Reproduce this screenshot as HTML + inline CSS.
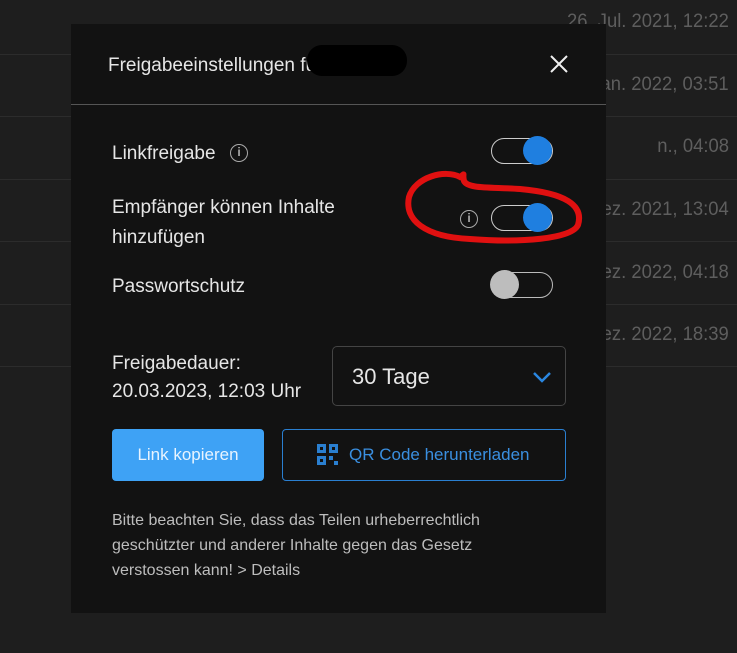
<!DOCTYPE html>
<html><head><meta charset="utf-8"><style>
*{margin:0;padding:0;box-sizing:border-box}
body{width:737px;height:653px;background:#1e1e1e;font-family:"Liberation Sans",sans-serif;position:relative;overflow:hidden;color:#e8e8e8}
.row{position:absolute;left:0;width:737px;height:1px;background:#2c2c2c}
.date{position:absolute;right:8px;font-size:19px;color:#5e5e5e;transform:scaleX(.97);transform-origin:right}
.modal{position:absolute;left:71px;top:24px;width:535px;height:589px;background:#121212}
.t{position:absolute;font-size:18px;color:#e6e6e6}
.tog{position:absolute;width:62px;height:26px;border:1.5px solid #ccc;border-radius:13px}
.knob{position:absolute;top:-3px;width:29px;height:29px;border-radius:50%;background:#1f7fe0}
.info{position:absolute;width:18px;height:18px;border:1.5px solid #aaa;border-radius:50%;font-size:12px;color:#aaa;text-align:center;line-height:15px;font-weight:bold}
</style></head><body>
<div class="row" style="top:54px"></div><div class="row" style="top:116px"></div><div class="row" style="top:179px"></div><div class="row" style="top:241px"></div><div class="row" style="top:304px"></div><div class="row" style="top:366px"></div>
<div class="date" style="top:11px">26. Jul. 2021, 12:22</div>
<div class="date" style="top:74px">Jan. 2022, 03:51</div>
<div class="date" style="top:136px">n., 04:08</div>
<div class="date" style="top:199px">Dez. 2021, 13:04</div>
<div class="date" style="top:262px">Dez. 2022, 04:18</div>
<div class="date" style="top:324px">Dez. 2022, 18:39</div>
<div class="modal">
<div class="t" style="left:37px;top:31px;font-size:19px">Freigabeeinstellungen fü</div>
<div style="position:absolute;left:236px;top:21px;width:100px;height:31px;background:#000;border-radius:15px"></div>
<svg style="position:absolute;left:478px;top:30px" width="20" height="20"><path d="M2 2L18 18M18 2L2 18" stroke="#eee" stroke-width="2"/></svg>
<div style="position:absolute;left:0;top:80px;width:535px;height:1px;background:#555"></div>
<div class="t" style="left:41px;top:119px;font-size:19px">Linkfreigabe</div>
<div class="info" style="left:159px;top:120px">i</div>
<div class="tog" style="left:420px;top:114px"><div class="knob" style="left:31px"></div></div>
<div class="t" style="left:41px;top:169px;line-height:30px;font-size:19px">Empfänger können Inhalte<br>hinzufügen</div>
<div class="info" style="left:389px;top:186px">i</div>
<div class="tog" style="left:420px;top:181px"><div class="knob" style="left:31px"></div></div>
<div class="t" style="left:41px;top:252px;font-size:19px">Passwortschutz</div>
<div class="tog" style="left:420px;top:248px;border-color:#bbb"><div class="knob" style="left:-2px;background:#bdbdbd"></div></div>
<div class="t" style="left:41px;top:326px;line-height:28px;font-size:19px">Freigabedauer:<br>20.03.2023, 12:03 Uhr</div>
<div style="position:absolute;left:261px;top:322px;width:234px;height:60px;border:1px solid #444;border-radius:5px"></div>
<div class="t" style="left:281px;top:340px;font-size:22px">30 Tage</div>
<svg style="position:absolute;left:461px;top:347px" width="20" height="12"><path d="M2 2L10 10L18 2" stroke="#2a86e0" stroke-width="2.5" fill="none"/></svg>
<div style="position:absolute;left:41px;top:405px;width:152px;height:52px;background:#3ea2f5;border-radius:4px;color:#e8f4ff;font-size:17px;text-align:center;line-height:52px">Link kopieren</div>
<div style="position:absolute;left:211px;top:405px;width:284px;height:52px;border:1.5px solid #2a7fd0;border-radius:4px;color:#3a8fe0;font-size:17px;line-height:49px;padding-left:66px">QR Code herunterladen</div>
<svg style="position:absolute;left:246px;top:420px" width="21" height="21" fill="#2a7fd0"><rect x="0" y="0" width="9" height="9"/><rect x="12" y="0" width="9" height="9"/><rect x="0" y="12" width="9" height="9"/><rect x="12" y="12" width="4" height="4"/><rect x="17" y="17" width="4" height="4"/><rect x="3" y="3" width="3" height="3" fill="#121212"/><rect x="15" y="3" width="3" height="3" fill="#121212"/><rect x="3" y="15" width="3" height="3" fill="#121212"/></svg>
<div class="t" style="left:41px;top:484px;font-size:16px;line-height:25px;color:#bdbdbd;width:410px">Bitte beachten Sie, dass das Teilen urheberrechtlich geschützter und anderer Inhalte gegen das Gesetz verstossen kann! &gt; Details</div>
</div>
<svg style="position:absolute;left:400px;top:165px" width="185" height="85"><path d="M60 12C45 4 15 12 9 32C4 55 25 72 70 74C120 78 172 74 178 60C184 40 165 28 120 24C90 22 68 24 64 16C62 8 66 8 60 12Z" stroke="#e01010" stroke-width="6" fill="none"/></svg>
</body></html>
